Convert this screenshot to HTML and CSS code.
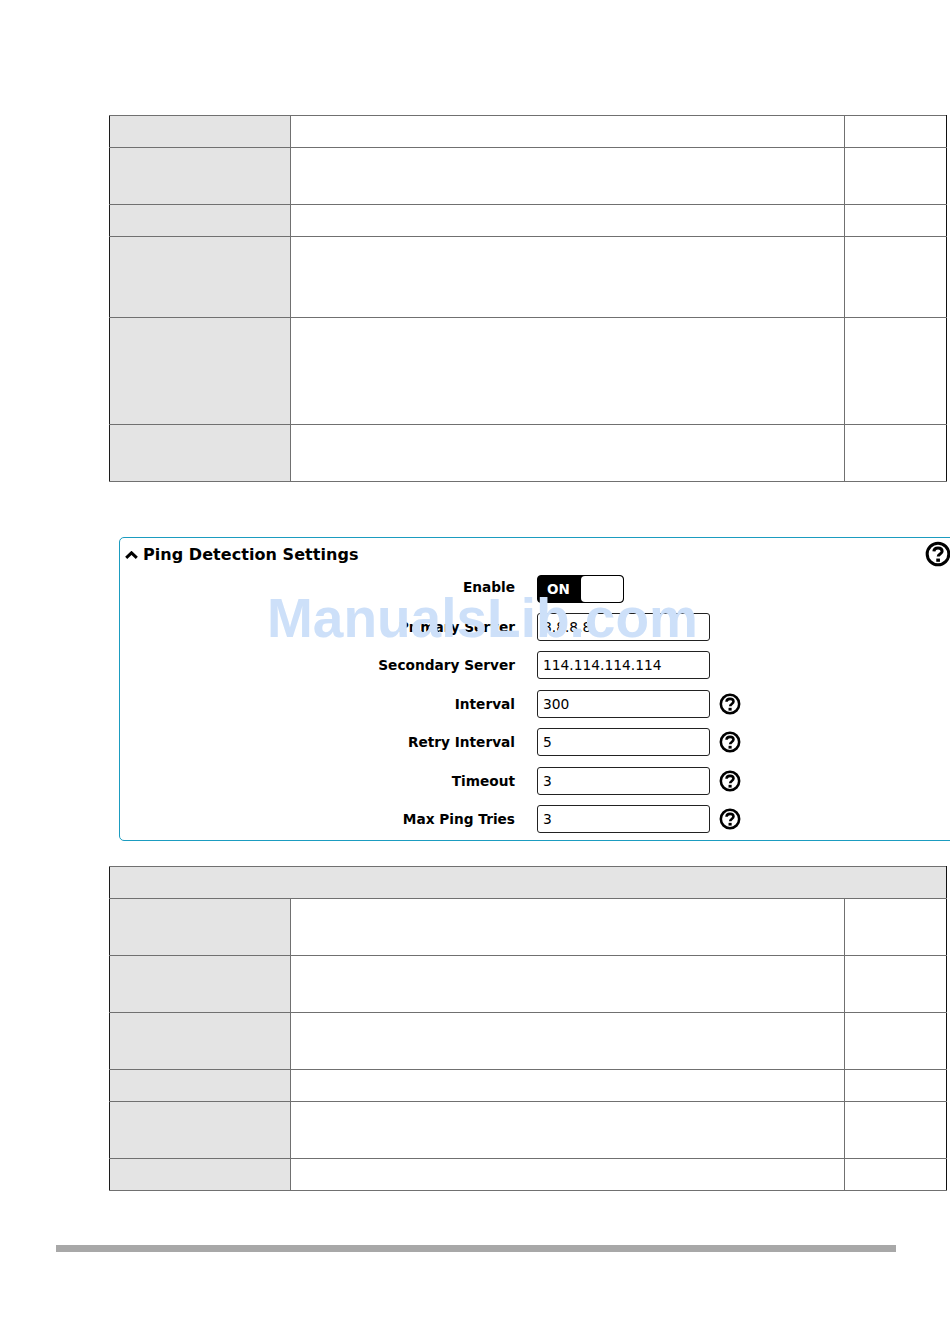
FILE: index.html
```html
<!DOCTYPE html>
<html lang="en">
<head>
<meta charset="utf-8">
<title>Ping Detection Settings</title>
<link rel="stylesheet" href="styles.css">
</head>
<body>
<main class="page">
  <table class="doc-table">
    <colgroup><col class="c1"><col class="c2"><col class="c3"></colgroup>
    <tr class="h32"><th></th><td></td><td></td></tr>
    <tr class="h57"><th></th><td></td><td></td></tr>
    <tr class="h32"><th></th><td></td><td></td></tr>
    <tr class="h81"><th></th><td></td><td></td></tr>
    <tr class="h107"><th></th><td></td><td></td></tr>
    <tr class="h57"><th></th><td></td><td></td></tr>
  </table>

  <section class="panel">
    <header class="panel-head">
      <svg class="chevron" viewBox="0 0 13 8"><path d="M1.2 6.8 6.5 1.8 11.8 6.8"/></svg>
      <h2>Ping Detection Settings</h2>
      <svg class="help help-lg" viewBox="0 0 24 24"><circle cx="12" cy="12" r="10"/><path d="M8.2 9.6C8.3 7.4 9.9 6.4 12 6.4c2.2 0 3.8 1.1 3.8 3 0 2.6-3.6 2.5-3.6 5"/><path class="dot" d="M10.4 16.2h3.4v3h-3.4z"/></svg>
    </header>
    <div class="form">
      <div class="row row-toggle"><label>Enable</label><div class="toggle"><span class="on">ON</span><span class="knob"></span></div></div>
      <div class="row"><label>Primary Server</label><div class="input">8.8.8.8</div></div>
      <div class="row"><label>Secondary Server</label><div class="input">114.114.114.114</div></div>
      <div class="row"><label>Interval</label><div class="input">300</div>
        <svg class="help" viewBox="0 0 24 24"><circle cx="12" cy="12" r="10"/><path d="M8.2 9.6C8.3 7.4 9.9 6.4 12 6.4c2.2 0 3.8 1.1 3.8 3 0 2.6-3.6 2.5-3.6 5"/><path class="dot" d="M10.4 16.2h3.4v3h-3.4z"/></svg></div>
      <div class="row"><label>Retry Interval</label><div class="input">5</div>
        <svg class="help" viewBox="0 0 24 24"><circle cx="12" cy="12" r="10"/><path d="M8.2 9.6C8.3 7.4 9.9 6.4 12 6.4c2.2 0 3.8 1.1 3.8 3 0 2.6-3.6 2.5-3.6 5"/><path class="dot" d="M10.4 16.2h3.4v3h-3.4z"/></svg></div>
      <div class="row"><label>Timeout</label><div class="input">3</div>
        <svg class="help" viewBox="0 0 24 24"><circle cx="12" cy="12" r="10"/><path d="M8.2 9.6C8.3 7.4 9.9 6.4 12 6.4c2.2 0 3.8 1.1 3.8 3 0 2.6-3.6 2.5-3.6 5"/><path class="dot" d="M10.4 16.2h3.4v3h-3.4z"/></svg></div>
      <div class="row"><label>Max Ping Tries</label><div class="input">3</div>
        <svg class="help" viewBox="0 0 24 24"><circle cx="12" cy="12" r="10"/><path d="M8.2 9.6C8.3 7.4 9.9 6.4 12 6.4c2.2 0 3.8 1.1 3.8 3 0 2.6-3.6 2.5-3.6 5"/><path class="dot" d="M10.4 16.2h3.4v3h-3.4z"/></svg></div>
    </div>
  </section>

  <table class="doc-table table-two">
    <colgroup><col class="c1"><col class="c2"><col class="c3"></colgroup>
    <tr class="h32"><th colspan="3" class="full"></th></tr>
    <tr class="h57"><th></th><td></td><td></td></tr>
    <tr class="h57"><th></th><td></td><td></td></tr>
    <tr class="h57"><th></th><td></td><td></td></tr>
    <tr class="h32"><th></th><td></td><td></td></tr>
    <tr class="h57"><th></th><td></td><td></td></tr>
    <tr class="h32"><th></th><td></td><td></td></tr>
  </table>

  <div class="footer-bar"></div>
</main>
<div class="watermark">ManualsLib.com</div>
</body>
</html>
```
FILE: styles.css
```css
html, body {
  margin: 0;
  padding: 0;
  background: #fff;
  overflow-x: hidden;
}
body {
  position: relative;
  width: 950px;
  height: 1344px;
  overflow: hidden;
  font-family: "DejaVu Sans", sans-serif;
  color: #000;
}
.page {
  padding: 115px 0 0 109px;
}
.doc-table {
  border-collapse: collapse;
  table-layout: fixed;
  width: 837px;
}
.c1 { width: 181px; }
.c2 { width: 554px; }
.c3 { width: 102px; }
.doc-table th,
.doc-table td {
  padding: 0;
  border: 1px solid #707070;
}
.doc-table th { background: #e4e4e4; }
.doc-table td { background: #fff; }
.doc-table th:first-child { border-left-color: #1c1c1c; }
.doc-table td:last-child,
.doc-table .full { border-right-color: #111; }
.h32 { height: 32px; }
.h57 { height: 57px; }
.h81 { height: 81px; }
.h107 { height: 107px; }

.panel {
  box-sizing: border-box;
  margin: 55px 0 0 10px;
  width: 860px;
  height: 304px;
  border: 1px solid #1b9cc0;
  border-radius: 5px;
}
.panel-head {
  display: flex;
  align-items: center;
  height: 36.6px;
  padding-left: 5px;
  padding-bottom: 3.5px;
  box-sizing: border-box;
  position: relative;
}
.chevron {
  width: 13px;
  height: 8px;
  margin-right: 5px;
}
.chevron path {
  fill: none;
  stroke: #000;
  stroke-width: 3;
}
.panel-head h2 {
  margin: 0;
  font-size: 16px;
  font-weight: 700;
  letter-spacing: 0.05px;
}
.help {
  width: 22px;
  height: 22px;
  margin-left: 9px;
  flex: none;
}
.help circle,
.help path {
  fill: none;
  stroke: #000;
  stroke-width: 2.8;
}
.help .dot {
  fill: #000;
  stroke: none;
}
.help-lg {
  position: absolute;
  left: 805px;
  top: 3px;
  margin: 0;
  width: 26px;
  height: 26px;
}
.row {
  display: flex;
  align-items: center;
  height: 28px;
  margin-bottom: 10.4px;
}
.row label {
  width: 395px;
  margin-right: 22px;
  text-align: right;
  font-size: 13.7px;
  font-weight: 700;
}
.row-toggle label {
  margin-bottom: 4px;
}
.input {
  box-sizing: border-box;
  width: 173px;
  height: 28px;
  padding-left: 5px;
  line-height: 26px;
  font-size: 13.8px;
  border: 1px solid #222;
  border-radius: 3px;
}
.toggle {
  box-sizing: border-box;
  display: flex;
  width: 87px;
  height: 28px;
  background: #000;
  border: 1px solid #000;
  border-radius: 4px;
}
.on {
  width: 43px;
  padding-left: 9px;
  box-sizing: border-box;
  line-height: 27px;
  color: #fff;
  font-size: 13.5px;
  font-weight: 700;
}
.knob {
  flex: 1;
  background: #fff;
  border-radius: 4px;
}
.table-two {
  margin-top: 25px;
}
.footer-bar {
  width: 840px;
  height: 7px;
  margin: 54px 0 0 -53px;
  background: #a8a8a8;
}
.watermark {
  position: absolute;
  left: 267px;
  top: 585px;
  font-family: "Liberation Sans", sans-serif;
  font-size: 55px;
  font-weight: 700;
  line-height: 66px;
  color: #cde0f9;
  white-space: nowrap;
}
```
